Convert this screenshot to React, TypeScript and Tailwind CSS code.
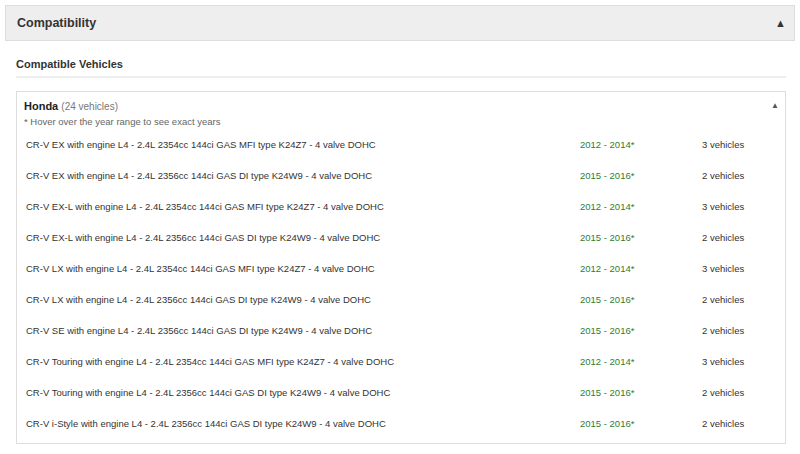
const rows = [
  ["CR-V EX with engine L4 - 2.4L 2354cc 144ci GAS MFI type K24Z7 - 4 valve DOHC", "2012 - 2014*", "3 vehicles"],
  ["CR-V EX with engine L4 - 2.4L 2356cc 144ci GAS DI type K24W9 - 4 valve DOHC", "2015 - 2016*", "2 vehicles"],
  ["CR-V EX-L with engine L4 - 2.4L 2354cc 144ci GAS MFI type K24Z7 - 4 valve DOHC", "2012 - 2014*", "3 vehicles"],
  ["CR-V EX-L with engine L4 - 2.4L 2356cc 144ci GAS DI type K24W9 - 4 valve DOHC", "2015 - 2016*", "2 vehicles"],
  ["CR-V LX with engine L4 - 2.4L 2354cc 144ci GAS MFI type K24Z7 - 4 valve DOHC", "2012 - 2014*", "3 vehicles"],
  ["CR-V LX with engine L4 - 2.4L 2356cc 144ci GAS DI type K24W9 - 4 valve DOHC", "2015 - 2016*", "2 vehicles"],
  ["CR-V SE with engine L4 - 2.4L 2356cc 144ci GAS DI type K24W9 - 4 valve DOHC", "2015 - 2016*", "2 vehicles"],
  ["CR-V Touring with engine L4 - 2.4L 2354cc 144ci GAS MFI type K24Z7 - 4 valve DOHC", "2012 - 2014*", "3 vehicles"],
  ["CR-V Touring with engine L4 - 2.4L 2356cc 144ci GAS DI type K24W9 - 4 valve DOHC", "2015 - 2016*", "2 vehicles"],
  ["CR-V i-Style with engine L4 - 2.4L 2356cc 144ci GAS DI type K24W9 - 4 valve DOHC", "2015 - 2016*", "2 vehicles"],
];

export default function App() {
  return (
    <div className="w-[800px] h-[454px] bg-white font-['Liberation_Sans',Arial,sans-serif] text-[#333] overflow-hidden pt-[5px] px-[5px]">
      <div className="flex items-center justify-between h-[36px] bg-[#eeeeee] border border-[#dddddd] pl-[11px] pr-[8px]">
        <h2 className="text-[12.5px] font-bold text-[#333]">Compatibility</h2>
        <span className="text-[11px] text-[#333] leading-none">▲</span>
      </div>

      <div className="px-[11px] pr-[9px]">
        <h3 className="mt-[15px] text-[11px] font-bold text-[#333] pb-[3px] border-b-2 border-[#eeeeee]">
          Compatible Vehicles
        </h3>

        <div className="mt-[13px] border border-[#dddddd] pl-[7px] pr-[6px] pt-[7px] pb-[3px]">
          <div className="flex justify-between items-start">
            <div className="text-[11px] leading-[14px]">
              <span className="font-bold text-[#222]">Honda</span>{" "}
              <span className="text-[#777] text-[10px]">(24 vehicles)</span>
            </div>
            <span className="text-[8px] text-[#555] leading-[14px]">▲</span>
          </div>
          <div className="text-[9.5px] text-[#666] leading-[13px] mt-[1px]">
            * Hover over the year range to see exact years
          </div>

          <div className="mt-[2px]">
            {rows.map(([desc, years, count]) => (
              <div key={desc} className="flex items-center h-[31px] text-[9.5px] text-[#333]">
                <div className="w-[556px] pl-[2px]">{desc}</div>
                <div className="w-[122px] text-[#2e7d32]">{years}</div>
                <div>{count}</div>
              </div>
            ))}
          </div>
        </div>
      </div>
    </div>
  );
}
